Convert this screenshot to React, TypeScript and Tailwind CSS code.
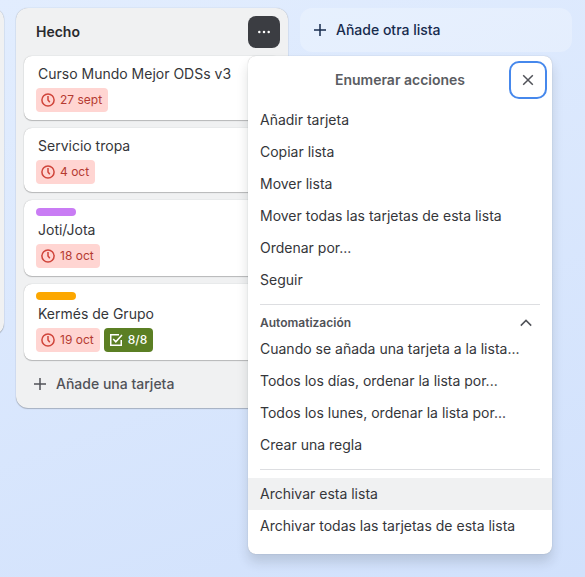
import type { ReactNode } from "react";

type Card = {
  title: string;
  date: string;
  label?: string;
  checklist?: string;
};

const cards: Card[] = [
  { title: "Curso Mundo Mejor ODSs v3", date: "27 sept" },
  { title: "Servicio tropa", date: "4 oct" },
  { title: "Joti/Jota", date: "18 oct", label: "bg-[#c97cf4]" },
  { title: "Kermés de Grupo", date: "19 oct", label: "bg-[#fca700]", checklist: "8/8" },
];

const listActions = [
  "Añadir tarjeta",
  "Copiar lista",
  "Mover lista",
  "Mover todas las tarjetas de esta lista",
  "Ordenar por...",
  "Seguir",
];

const automations = [
  "Cuando se añada una tarjeta a la lista...",
  "Todos los días, ordenar la lista por...",
  "Todos los lunes, ordenar la lista por...",
  "Crear una regla",
];

function Icon({ children, className = "", width = 1.5 }: { children: ReactNode; className?: string; width?: number }) {
  return (
    <svg
      viewBox="0 0 16 16"
      fill="none"
      stroke="currentColor"
      strokeWidth={width}
      className={`size-4 shrink-0 ${className}`}
    >
      {children}
    </svg>
  );
}

function PlusIcon({ className }: { className?: string }) {
  return (
    <Icon className={className}>
      <path d="M8 2v12M2 8h12" />
    </Icon>
  );
}

function CardTile({ card }: { card: Card }) {
  return (
    <article className="rounded-lg bg-white px-3 py-2 shadow-[0_1px_1px_#1e1f2140,0_0_1px_#1e1f214f]">
      {card.label && <div className={`mb-1 h-2 w-10 rounded-full ${card.label}`} />}
      <h3 className="mb-1 pl-0.5 text-[14px] leading-5 text-[#35363a]">{card.title}</h3>
      <div className="flex gap-1">
        <span className="flex h-6 items-center gap-1 rounded bg-[#ffd5d2] pr-1.5 pl-1 text-[12px] leading-5 text-[#b53a31]">
          <Icon className="text-[#d0443a]">
            <circle cx="8" cy="8" r="6.1" />
            <path d="M8 4v4l1.8 2.2" />
          </Icon>
          {card.date}
        </span>
        {card.checklist && (
          <span className="flex h-6 items-center gap-1 rounded bg-[#5b7f24] pr-1.5 pl-1 text-[12px] leading-5 font-medium text-white">
            <Icon>
              <path d="M13.25 8v5.25H2.75V2.75H11M5.2 7l2.6 2.8L14 3" />
            </Icon>
            {card.checklist}
          </span>
        )}
      </div>
    </article>
  );
}

function MenuItem({ label, active = false }: { label: string; active?: boolean }) {
  return (
    <button
      className={`block h-8 w-full px-3 text-left text-[14px] leading-5 text-[#35363a] ${active ? "bg-[#f0f1f2]" : ""}`}
    >
      {label}
    </button>
  );
}

function ActionsMenu() {
  return (
    <div className="absolute top-14 left-[248px] h-[498px] w-[304px] rounded-lg bg-white shadow-[0_8px_12px_#1e1f2126,0_0_1px_#1e1f214f]">
      <header className="grid h-12 grid-cols-[38px_1fr_38px] items-center pr-[5px] pl-[5px]">
        <h2 className="col-start-2 text-center text-[14px] leading-5 font-semibold text-[#5a5c62]">Enumerar acciones</h2>
        <button className="flex size-[38px] items-center justify-center rounded-[10px] border-2 border-[#4688ec] text-[#505258]">
          <Icon>
            <path d="M3.2 3.2l9.6 9.6M12.8 3.2l-9.6 9.6" />
          </Icon>
        </button>
      </header>
      {listActions.map((label) => (
        <MenuItem key={label} label={label} />
      ))}
      <div className="mx-3 mt-2 h-px bg-[#dddee1]" />
      <div className="flex h-7 items-center justify-between pt-2 pr-[18px] pl-3 text-[#505258]">
        <h3 className="text-[12px] leading-4 font-semibold">Automatización</h3>
        <Icon>
          <path d="M2.8 10.6L8 5.4l5.2 5.2" />
        </Icon>
      </div>
      {automations.map((label) => (
        <MenuItem key={label} label={label} />
      ))}
      <div className="mx-3 my-2 h-px bg-[#dddee1]" />
      <MenuItem label="Archivar esta lista" active />
      <MenuItem label="Archivar todas las tarjetas de esta lista" />
    </div>
  );
}

export default function App() {
  return (
    <main className="relative flex h-[577px] w-[585px] items-start gap-3 overflow-hidden bg-linear-160 from-[#e2edfe] to-[#d1e1fc] pt-2 font-['Inter',sans-serif]">
      <div className="-ml-[268px] h-[327px] w-[272px] shrink-0 rounded-xl bg-[#f0f1f2] shadow-[0_1px_1px_#1e1f2140,0_0_1px_#1e1f214f]" />
      <section className="h-[400px] w-[272px] shrink-0 rounded-xl bg-[#f0f1f2] px-2 pt-2 shadow-[0_1px_1px_#1e1f2140,0_0_1px_#1e1f214f]">
        <header className="flex h-8 items-center justify-between pl-3">
          <h2 className="text-[14px] leading-5 font-semibold text-[#292a2e]">Hecho</h2>
          <button className="flex size-8 items-center justify-center rounded-lg bg-[#3b3d42] text-white">
            <svg viewBox="0 0 16 16" fill="currentColor" className="size-4">
              <circle cx="3.3" cy="8" r="1.25" />
              <circle cx="8" cy="8" r="1.25" />
              <circle cx="12.7" cy="8" r="1.25" />
            </svg>
          </button>
        </header>
        <div className="mt-2 flex flex-col gap-2">
          {cards.map((card) => (
            <CardTile key={card.title} card={card} />
          ))}
        </div>
        <button className="mt-2 flex h-8 items-center gap-2 pl-2 text-[14px] leading-5 font-medium text-[#505258]">
          <PlusIcon />
          Añade una tarjeta
        </button>
      </section>
      <button className="flex h-11 w-[272px] shrink-0 items-center gap-2 rounded-xl bg-white/24 pl-3 text-[14px] leading-5 font-medium text-[#172b4d]">
        <PlusIcon />
        Añade otra lista
      </button>
      <ActionsMenu />
    </main>
  );
}
